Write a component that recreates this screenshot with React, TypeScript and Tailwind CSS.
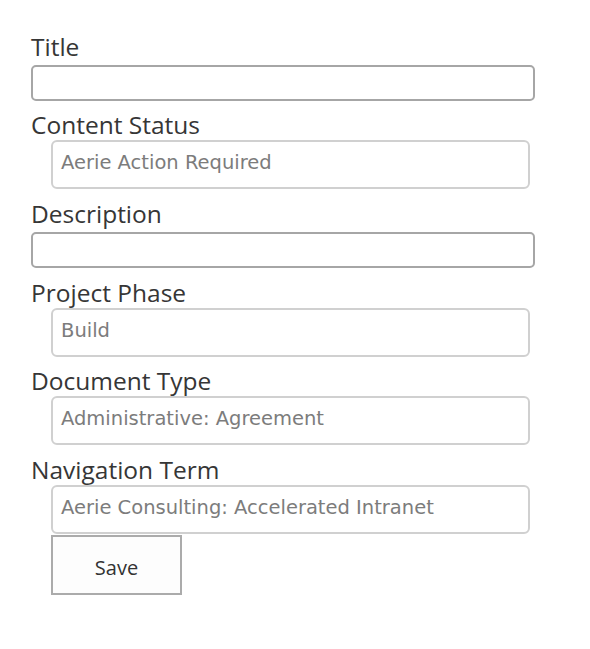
const labelFont = { fontFamily: '"Open Sans", "Noto Sans", sans-serif' };
const valueFont = { fontFamily: '"DejaVu Sans", Verdana, sans-serif' };

function Label({ text, className = '' }: { text: string; className?: string }) {
  return (
    <div
      className={`h-[30px] text-[24.5px] leading-[30px] text-[#363636] whitespace-nowrap ${className}`}
      style={labelFont}
    >
      {text}
    </div>
  );
}

function TextBox() {
  return (
    <div className="mt-[3px] h-[36px] w-[504px] rounded-[5px] border-2 border-[#a6a6a6] bg-white" />
  );
}

function ValueBox({ value }: { value: string }) {
  return (
    <div className="ml-[20px] flex h-[49px] w-[479px] items-center rounded-[6px] border-2 border-[#d0d0d0] bg-white pl-[8px] pb-[3px]">
      <span className="text-[19.5px] text-[#7c7c7c] whitespace-nowrap" style={valueFont}>
        {value}
      </span>
    </div>
  );
}

export default function App() {
  return (
    <div className="min-h-[649px] w-[590px] bg-white pl-[31px] pt-[32px]">
      <Label text="Title" />
      <TextBox />

      <Label text="Content Status" className="mt-[9px]" />
      <ValueBox value="Aerie Action Required" />

      <Label text="Description" className="mt-[10px]" />
      <TextBox />

      <Label text="Project Phase" className="mt-[10px]" />
      <ValueBox value="Build" />

      <Label text="Document Type" className="mt-[9px]" />
      <ValueBox value="Administrative: Agreement" />

      <Label text="Navigation Term" className="mt-[10px]" />
      <ValueBox value="Aerie Consulting: Accelerated Intranet" />

      <button
        className="ml-[20px] mt-[1px] h-[60px] w-[131px] border-2 border-[#ababab] bg-[#fdfdfd] pt-[5px] text-[20px] text-[#333333]"
        style={labelFont}
      >
        Save
      </button>
    </div>
  );
}
